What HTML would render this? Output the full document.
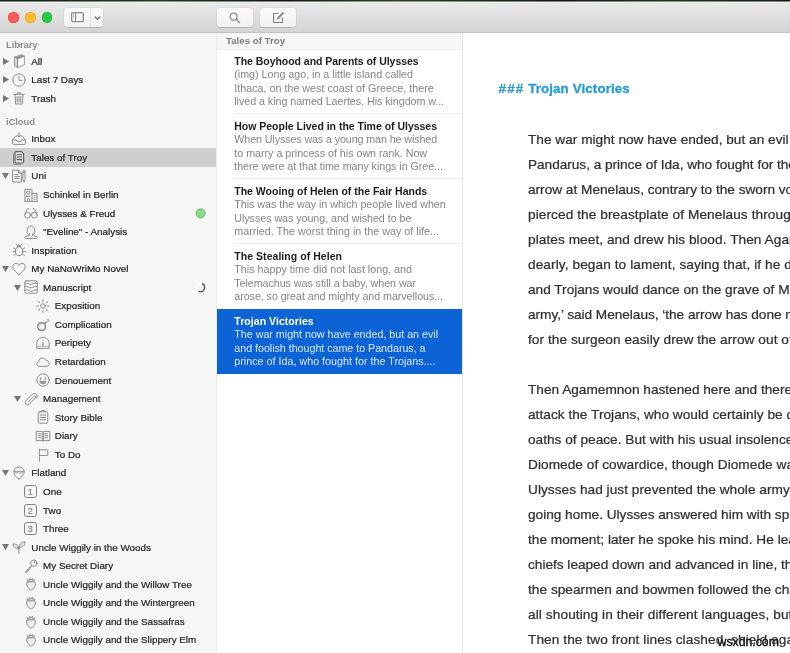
<!DOCTYPE html>
<html>
<head>
<meta charset="utf-8">
<title>Ulysses</title>
<style>
*{box-sizing:border-box;margin:0;padding:0}
html,body{width:790px;height:653px;overflow:hidden;background:#fff;font-family:"Liberation Sans",sans-serif;}
body{position:relative}
#sidebar,#list,#editor,#wm{filter:blur(.35px)}
#topstrip{position:absolute;left:0;top:0;width:790px;height:2px;background:linear-gradient(90deg,#101a10,#1d3a1e 20%,#0e160e 35%,#22451f 50%,#0d140d 70%,#1a3519 85%,#0f170f)}
#topstrip:after{content:"";position:absolute;left:0;top:1px;width:790px;height:1px;background:rgba(232,232,232,.55)}
#toolbar{position:absolute;left:0;top:2px;width:790px;height:31px;background:linear-gradient(#eaeaea,#d4d4d4);border-bottom:1px solid #c3c3c3}
.tl{position:absolute;top:9.9px;width:10.8px;height:10.8px;border-radius:50%}
.btn{position:absolute;top:6.4px;height:18.2px;background:linear-gradient(#fafafa,#f2f2f2);border-radius:3.5px;box-shadow:0 0.5px 1px rgba(0,0,0,.16),0 0 0 .5px rgba(0,0,0,.04)}
#sidebar{position:absolute;left:0;top:33px;width:216.6px;height:620px;background:#f6f6f6;border-right:1px solid #ebebeb}
.sh{position:absolute;left:6px;font-size:9.5px;font-weight:bold;color:#8d8d8d;line-height:12px;letter-spacing:-.1px}
.row{position:absolute;left:0;width:215.6px;height:18.56px;font-size:9.85px;color:#262626;line-height:18.56px;white-space:nowrap;-webkit-text-stroke:.22px #262626}
.row.sel{background:#cfcfcf}
.row span{position:absolute;top:.6px}
.tri{position:absolute;width:8px;height:8px;overflow:visible}
.tri polygon{fill:#757575}
.ic{position:absolute;top:2.3px;width:14px;height:14px;overflow:visible}
.ic *{fill:none;stroke:#878787;stroke-width:.95;stroke-linecap:round;stroke-linejoin:round}
#list{position:absolute;left:216.6px;top:33px;width:245.4px;height:620px;background:#fff}
#lhead{position:absolute;left:0;top:0;width:245.4px;height:16.8px;background:#f6f6f6;border-bottom:1px solid #ececec;font-size:9.7px;font-weight:bold;color:#808080;line-height:16.5px;padding-left:9.4px}
.item{position:absolute;left:0;width:245.4px;height:65px}
.item b{position:absolute;left:17.7px;top:6.0px;font-size:10.5px;line-height:13px;color:#1c1c1c;white-space:nowrap;letter-spacing:0}
.item p{position:absolute;left:17.7px;font-size:10.72px;line-height:13.55px;color:#858585;white-space:nowrap}
.item i{position:absolute;left:17.4px;right:0;bottom:0;height:1px;background:#ececec}
.item.sel{background:#0b63d6}
.item.sel b{color:#fff}
.item.sel p{color:#d9e6fa}
#editor{position:absolute;left:462px;top:33px;width:328px;height:620px;background:#fff;border-left:1px solid #e8e8e8;overflow:hidden}
#h3{position:absolute;left:35.5px;top:47.3px;font-size:13.3px;font-weight:bold;color:#279dd3;-webkit-text-stroke:.3px #279dd3;line-height:18px;white-space:nowrap}
.para{position:absolute;left:65px;font-size:13.65px;line-height:25px;color:#303030;white-space:nowrap;-webkit-text-stroke:.24px #303030}
#wm{position:absolute;left:717.6px;top:634.2px;font-size:12.25px;line-height:16px;color:#000;white-space:nowrap;-webkit-text-stroke:.3px #000;text-shadow:0 0 1.5px rgba(255,255,255,.9),0 0 1.5px rgba(255,255,255,.9)}
</style>
</head>
<body>
<div id="topstrip"></div>
<div id="toolbar">
  <div class="tl" style="left:8px;background:#fc5b57;box-shadow:inset 0 0 0 .5px #df4744"></div>
  <div class="tl" style="left:25px;background:#fdbc2e;box-shadow:inset 0 0 0 .5px #de9f34"></div>
  <div class="tl" style="left:41.5px;background:#28c83f;box-shadow:inset 0 0 0 .5px #27aa35"></div>
  <div class="btn" style="left:64px;width:39px">
    <svg style="position:absolute;left:6.7px;top:4px" width="13" height="10.2" viewBox="0 0 14 11"><rect x=".7" y=".7" width="12.6" height="9.6" rx="1" fill="none" stroke="#8c8c8c" stroke-width="1.4"/><line x1="4.9" y1=".7" x2="4.9" y2="10.3" stroke="#8c8c8c" stroke-width="1.2"/><line x1="2" y1="3" x2="3.6" y2="3" stroke="#8c8c8c" stroke-width=".8"/><line x1="2" y1="5" x2="3.6" y2="5" stroke="#8c8c8c" stroke-width=".8"/></svg>
    <div style="position:absolute;left:26.2px;top:0;width:1px;height:18.2px;background:#e6e6e6"></div>
    <svg style="position:absolute;left:30.2px;top:7.2px" width="7" height="5" viewBox="0 0 7 5"><path d="M1.1 1l2.3 2.3L5.7 1" fill="none" stroke="#757575" stroke-width="1.5" stroke-linecap="round" stroke-linejoin="round"/></svg>
  </div>
  <div class="btn" style="left:217px;width:36px">
    <svg style="position:absolute;left:11.8px;top:3.4px" width="12" height="12" viewBox="0 0 12 12"><circle cx="4.6" cy="4.6" r="3.5" fill="none" stroke="#808080" stroke-width="1.05"/><line x1="7.2" y1="7.2" x2="10.6" y2="10.6" stroke="#808080" stroke-width="1.3" stroke-linecap="round"/></svg>
  </div>
  <div class="btn" style="left:260px;width:36px">
    <svg style="position:absolute;left:12px;top:2.4px" width="13" height="13" viewBox="0 0 13 13"><path d="M6.6 2.4H1.6v9H10.4V6.6" fill="none" stroke="#808080" stroke-width="1.05" stroke-linejoin="round"/><path d="M4.8 8.4l.5-2L10.8 .9l1.4 1.4-5.5 5.5z" fill="#808080" stroke="none"/></svg>
  </div>
</div>

<div id="sidebar">
<div class="sh" style="top:6.0px">Library</div>
<div class="sh" style="top:83.0px">iCloud</div>
<div class="row" style="top:19.12px"><svg class="tri" style="left:2.9px;top:5.8px" viewBox="0 0 8 8"><polygon points="0,0 6.1,3.5 0,7"/></svg><svg class="ic" style="left:12.2px;top:2.3px;width:14px;height:14px" viewBox="0 0 14 14"><g style="stroke-width:.8"><path d="M2.800 3L9.200 .8L12.400 2.200L6 4.800Z" style="fill:#999;stroke-width:.8"/><path d="M2.800 3L6 4.800V13.400L2.800 11.800Z" style="fill:#d8d8d8;stroke-width:.8"/><path d="M6 4.800L12.400 2.200V10.800L6 13.400Z" style="fill:#fdfdfd;stroke-width:.8"/></g></svg><span style="left:31.30px;letter-spacing:0.000px">All</span></div>
<div class="row" style="top:37.32px"><svg class="tri" style="left:2.9px;top:5.8px" viewBox="0 0 8 8"><polygon points="0,0 6.1,3.5 0,7"/></svg><svg class="ic" style="left:12.2px;top:2.3px;width:14px;height:14px" viewBox="0 0 14 14"><circle cx="7" cy="7" r="6.2"/><path d="M7 3.2V7.4H10"/></svg><span style="left:31.30px;letter-spacing:0.000px">Last 7 Days</span></div>
<div class="row" style="top:55.92px"><svg class="tri" style="left:2.9px;top:5.8px" viewBox="0 0 8 8"><polygon points="0,0 6.1,3.5 0,7"/></svg><svg class="ic" style="left:12.2px;top:2.3px;width:14px;height:14px" viewBox="0 0 14 14"><path d="M3 3.6L3.6 13H10.4L11 3.6"/><path d="M1.8 3.4H12.2"/><path d="M5.3 3.2V1.8H8.7V3.2"/><path d="M5.2 5.5V11.2M7 5.5V11.2M8.8 5.5V11.2"/></svg><span style="left:31.30px;letter-spacing:0.000px">Trash</span></div>
<div class="row" style="top:96.72px"><svg class="ic" style="left:12.2px;top:2.3px;width:14px;height:14px" viewBox="0 0 14 14"><path d="M5.400 4H4.200Q3.600 4 3.300 4.500L.6 8V11.600Q.6 12.400 1.400 12.400H12.600Q13.400 12.400 13.400 11.600V8L10.700 4.500Q10.400 4 9.800 4H8.600"/><path d="M.6 8H4.400L5 9.300H9L9.600 8H13.400"/><path d="M7 .4V5M5.500 3.500L7 5L8.500 3.500"/></svg><span style="left:31.30px;letter-spacing:0.000px">Inbox</span></div>
<div class="row sel" style="top:115.28px"><svg class="ic" style="left:12.2px;top:2.3px;width:14px;height:14px" viewBox="0 0 14 14"><path d="M3 2.200H2.600Q1.600 2.200 1.600 3.200V12Q1.600 13.200 2.800 13.200H9" style="stroke:#747474;stroke-width:.9"/><path d="M4.200 .6H9.600L11.600 2.600V10.800Q11.600 12 10.400 12H4.200Q3 12 3 10.800V1.800Q3 .6 4.200 .6Z" style="fill:#e2e2e2;stroke:#666;stroke-width:1.2"/><path d="M5 3.800H9.600M5 6H9.600M5 8.600H9.600" style="stroke:#5e5e5e;stroke-width:1.1"/></svg><span style="left:31.30px;letter-spacing:0.000px">Tales of Troy</span></div>
<div class="row" style="top:133.84px"><svg class="tri" style="left:1.9px;top:6.4px" viewBox="0 0 8 8"><polygon points="0,0 7,0 3.5,6.1"/></svg><svg class="ic" style="left:12.2px;top:2.3px;width:14px;height:14px" viewBox="0 0 14 14"><path d="M1 1.2H6.8L9.4 3.8V13H1Z"/><path d="M6.6 1.4V4H9.2"/><path d="M2.8 5.6H6.2M2.8 7.6H7.4M2.8 9.6H7.4"/><path d="M11 2.2Q11 1 12 1T13 2.2V10.6L12 13.2L11 10.6Z"/><path d="M11 3.4H13"/></svg><span style="left:31.30px;letter-spacing:0.000px">Uni</span></div>
<div class="row" style="top:152.40px"><svg class="ic" style="left:23.95px;top:2.3px;width:14px;height:14px" viewBox="0 0 14 14"><path d="M1 13.4V1.4H8V13.4"/><path d="M8 5.4H13V13.4"/><path d="M.6 13.4H13.6"/><path d="M3 3.4H5.8V5.2H3ZM3 7H5.8V8.6H3ZM3.4 13.2V10.8H5.6V13.2M10 7.6H11.4M10 9.6H11.4M10 11.6H11.4" style="stroke-width:.7"/></svg><span style="left:43.05px;letter-spacing:0.000px">Schinkel in Berlin</span></div>
<div class="row" style="top:170.96px"><svg class="ic" style="left:23.95px;top:2.3px;width:14px;height:14px" viewBox="0 0 14 14"><circle cx="3.6" cy="9.2" r="2.9"/><circle cx="10.4" cy="9.2" r="2.9"/><path d="M6.4 8.6Q7 8 7.6 8.6"/><path d="M1 8L3.2 3.2Q3.8 2.2 5 2.8M13 8L10.8 3.2Q10.2 2.2 9 2.8"/></svg><span style="left:43.05px;letter-spacing:0.000px">Ulysses &amp; Freud</span><svg style="position:absolute;left:195px;top:4px" width="11" height="11" viewBox="0 0 11 11"><circle cx="5.6" cy="5.4" r="4.6" fill="#8bd98b" stroke="#6fc06e" stroke-width="1"/></svg></div>
<div class="row" style="top:189.52px"><svg class="ic" style="left:23.95px;top:2.3px;width:14px;height:14px" viewBox="0 0 14 14"><path d="M4.4 9.4C2.6 8.6 3.2 6.2 3.4 4.6C3.6 2.4 5 1 7 1S10.4 2.4 10.6 4.6C10.8 6.2 11.4 8.6 9.6 9.4"/><path d="M5.4 8.6V10.4L1.6 11.4Q.8 11.7 .8 12.4T1.6 13.4H12.4Q13.2 13.4 13.2 12.4T12.4 11.4L8.6 10.4V8.6"/></svg><span style="left:43.05px;letter-spacing:0.000px">"Eveline" - Analysis</span></div>
<div class="row" style="top:208.08px"><svg class="ic" style="left:12.2px;top:2.3px;width:14px;height:14px" viewBox="0 0 14 14"><path d="M7 3.6C9.4 3.6 10.6 5.6 10.6 8.4S9.2 12.6 7 12.6S3.400 11.200 3.400 8.400S4.600 3.600 7 3.600Z"/><path d="M5.4 3.800Q5.400 2 7 2T8.600 3.800"/><path d="M3.600 6.400L1.400 5M3.400 8.600H.8M3.800 10.800L1.600 12.600M10.400 6.400L12.600 5M10.600 8.600H13.200M10.200 10.800L12.400 12.600M5.400 2.400L4.400 1M8.600 2.400L9.600 1"/></svg><span style="left:31.30px;letter-spacing:0.000px">Inspiration</span></div>
<div class="row" style="top:226.64px"><svg class="tri" style="left:1.9px;top:6.4px" viewBox="0 0 8 8"><polygon points="0,0 7,0 3.5,6.1"/></svg><svg class="ic" style="left:12.2px;top:2.3px;width:14px;height:14px" viewBox="0 0 14 14"><path d="M7 12.600C4 10.200 .800 7.800 .800 4.800C.800 2.800 2.200 1.400 4 1.400C5.400 1.400 6.400 2.200 7 3.400C7.600 2.200 8.600 1.400 10 1.400C11.800 1.400 13.200 2.800 13.200 4.800C13.200 7.800 10 10.200 7 12.600Z"/></svg><span style="left:31.30px;letter-spacing:0.000px">My NaNoWriMo Novel</span></div>
<div class="row" style="top:245.20px"><svg class="tri" style="left:14.2px;top:6.4px" viewBox="0 0 8 8"><polygon points="0,0 7,0 3.5,6.1"/></svg><svg class="ic" style="left:23.95px;top:2.3px;width:14px;height:14px" viewBox="0 0 14 14"><rect x=".8" y=".8" width="12.400" height="12.400" rx="1.400"/><path d="M.8 3.400Q2.400 2.400 4 3.400T7 4.400T10 3.400T13.200 3.400M.8 6.800Q2.400 5.800 4 6.800T7 7.800T10 6.800T13.200 6.800M.8 10.200Q2.400 9.200 4 10.200T7 11.200T10 10.200T13.200 10.200"/></svg><span style="left:43.05px;letter-spacing:0.000px">Manuscript</span><svg style="position:absolute;left:195px;top:4px" width="11" height="11" viewBox="0 0 11 11"><circle cx="5.500" cy="5.500" r="4.200" fill="none" stroke="#fcfcfc" stroke-width="1.500"/><path d="M6.94 1.55A4.2 4.2 0 1 1 3.4 9.14" fill="none" stroke="#5e5e5e" stroke-width="1.500"/></svg></div>
<div class="row" style="top:263.76px"><svg class="ic" style="left:35.7px;top:2.3px;width:14px;height:14px" viewBox="0 0 14 14"><circle cx="7" cy="7" r="2.300"/><path d="M7 .6V2.600M7 11.400V13.400M.6 7H2.600M11.400 7H13.400M2.500 2.500L3.900 3.900M10.100 10.100L11.500 11.500M2.500 11.500L3.900 10.100M10.100 3.900L11.500 2.500"/></svg><span style="left:54.80px;letter-spacing:0.000px">Exposition</span></div>
<div class="row" style="top:282.32px"><svg class="ic" style="left:35.7px;top:2.3px;width:14px;height:14px" viewBox="0 0 14 14"><circle cx="5.600" cy="8.600" r="3.900" style="stroke-width:1.5"/><path d="M8.400 5.800L10 4.200" style="stroke-width:1.4"/><path d="M10 4.200Q10.800 2.600 12.400 3" style="stroke-width:.8"/><path d="M12.600 1.200V2M13.400 2.800H12.800M11.400 1.400L11.800 2" style="stroke-width:.6"/><path d="M3.600 8.200Q3.800 6.800 5.200 6.600" style="stroke-width:.7;stroke:#b5b5b5"/></svg><span style="left:54.80px;letter-spacing:0.000px">Complication</span></div>
<div class="row" style="top:300.88px"><svg class="ic" style="left:35.7px;top:2.3px;width:14px;height:14px" viewBox="0 0 14 14"><path d="M.8 12V7.400C.8 3.800 3.600 1.400 7 1.400S13.200 3.800 13.200 7.400V12Z"/><path d="M7 6.400V10M7 4.400V4.600"/><path d="M.8 10.400H13.200" style="stroke-width:.6"/></svg><span style="left:54.80px;letter-spacing:0.000px">Peripety</span></div>
<div class="row" style="top:319.44px"><svg class="ic" style="left:35.7px;top:2.3px;width:14px;height:14px" viewBox="0 0 14 14"><path d="M3.400 11.400C1.800 11.400 .8 10.400 .8 9C.8 7.800 1.600 6.800 2.800 6.600C2.800 4.400 4.400 3 6.200 3C7.800 3 9 3.800 9.600 5.200C11.600 5.200 13.200 6.600 13.200 8.400C13.200 10.200 11.800 11.400 10.200 11.400Z"/></svg><span style="left:54.80px;letter-spacing:0.000px">Retardation</span></div>
<div class="row" style="top:338.00px"><svg class="ic" style="left:35.7px;top:2.3px;width:14px;height:14px" viewBox="0 0 14 14"><circle cx="7" cy="7" r="6.200"/><path d="M4.800 5V6M9.200 5V6" style="stroke-width:1.400"/><path d="M3.800 8.200H10.200Q9.800 11 7 11T3.800 8.200Z" style="fill:#9a9a9a;stroke-width:.7"/></svg><span style="left:54.80px;letter-spacing:0.000px">Denouement</span></div>
<div class="row" style="top:356.56px"><svg class="tri" style="left:14.2px;top:6.4px" viewBox="0 0 8 8"><polygon points="0,0 7,0 3.5,6.1"/></svg><svg class="ic" style="left:23.95px;top:2.3px;width:14px;height:14px" viewBox="0 0 14 14"><path d="M4.400 9.800L9.800 4.400Q10.800 3.400 11.600 4.200T11.400 6L5.400 12Q3.600 13.600 2 12T2 8.600L8.400 2.200Q10.400 .4 12.400 2.200T12.600 6.200"/></svg><span style="left:43.05px;letter-spacing:0.000px">Management</span></div>
<div class="row" style="top:375.12px"><svg class="ic" style="left:35.7px;top:2.3px;width:14px;height:14px" viewBox="0 0 14 14"><rect x="2.200" y="1.800" width="9.600" height="11.400" rx="1.400"/><path d="M5 1.800V.8H9V1.800" /><path d="M4.200 5H9.800M4.200 7.400H9.800M4.200 9.800H9.800"/></svg><span style="left:54.80px;letter-spacing:0.000px">Story Bible</span></div>
<div class="row" style="top:393.68px"><svg class="ic" style="left:35.7px;top:2.3px;width:14px;height:14px" viewBox="0 0 14 14"><path d="M.6 2.400H6.200Q7 2.400 7 3.200V12.200Q7 11.600 6.200 11.600H.6ZM13.400 2.400H7.800Q7 2.400 7 3.200V12.200Q7 11.600 7.800 11.600H13.400Z"/><path d="M2.400 4.800H5.200M2.400 6.800H5.200M2.400 8.800H5.200M8.800 4.800H11.600M8.800 6.800H11.600M8.800 8.800H11.600"/></svg><span style="left:54.80px;letter-spacing:0.000px">Diary</span></div>
<div class="row" style="top:412.24px"><svg class="ic" style="left:35.7px;top:2.3px;width:14px;height:14px" viewBox="0 0 14 14"><path d="M3.400 1V13.400"/><path d="M3.400 1.800H11.800V7.400H3.400"/></svg><span style="left:54.80px;letter-spacing:0.000px">To Do</span></div>
<div class="row" style="top:430.80px"><svg class="tri" style="left:1.9px;top:6.4px" viewBox="0 0 8 8"><polygon points="0,0 7,0 3.5,6.1"/></svg><svg class="ic" style="left:12.2px;top:2.3px;width:14px;height:14px" viewBox="0 0 14 14"><path d="M7 13C5 11.800 1.800 9.200 1.800 5.800C1.800 2.800 4.200 1 7 1S12.200 2.800 12.200 5.800C12.200 9.200 9 11.800 7 13Z"/><path d="M2 5.400H12" style="stroke-width:.8"/><path d="M3.200 5.600Q3.400 7.400 5 7.100T6.400 5.800M10.800 5.600Q10.600 7.400 9 7.100T7.600 5.800" style="stroke-width:.8"/></svg><span style="left:31.30px;letter-spacing:0.000px">Flatland</span></div>
<div class="row" style="top:449.36px"><div style="position:absolute;left:23.849999999999998px;top:2.8px;width:13px;height:13px;border:1.25px solid #828282;border-radius:2.8px;-webkit-text-stroke:.2px #858585;font-size:9px;line-height:12.2px;text-align:center;color:#858585">1</div><span style="left:43.05px;letter-spacing:0.000px">One</span></div>
<div class="row" style="top:467.92px"><div style="position:absolute;left:23.849999999999998px;top:2.8px;width:13px;height:13px;border:1.25px solid #828282;border-radius:2.8px;-webkit-text-stroke:.2px #858585;font-size:9px;line-height:12.2px;text-align:center;color:#858585">2</div><span style="left:43.05px;letter-spacing:0.000px">Two</span></div>
<div class="row" style="top:486.48px"><div style="position:absolute;left:23.849999999999998px;top:2.8px;width:13px;height:13px;border:1.25px solid #828282;border-radius:2.8px;-webkit-text-stroke:.2px #858585;font-size:9px;line-height:12.2px;text-align:center;color:#858585">3</div><span style="left:43.05px;letter-spacing:0.000px">Three</span></div>
<div class="row" style="top:505.04px"><svg class="tri" style="left:1.9px;top:6.4px" viewBox="0 0 8 8"><polygon points="0,0 7,0 3.5,6.1"/></svg><svg class="ic" style="left:12.2px;top:2.3px;width:14px;height:14px" viewBox="0 0 14 14"><path d="M7 13.400V6.800"/><path d="M7 7.400C7 4.600 9 2.200 13 1.600C13.200 5.400 10.600 7.600 7 7.400ZM7 8.800C4.400 9 1.400 7.600 1 4C4.200 3.600 6.600 5.600 7 8.800Z"/><path d="M7.400 7L11 3.400M6.600 8.400L3.200 5.600" style="stroke-width:.6"/></svg><span style="left:31.30px;letter-spacing:0.000px">Uncle Wiggily in the Woods</span></div>
<div class="row" style="top:523.60px"><svg class="ic" style="left:23.95px;top:2.3px;width:14px;height:14px" viewBox="0 0 14 14"><circle cx="9.800" cy="4.200" r="3.200"/><path d="M7.400 6.600L1.200 12.800V13.200H3V12H4.200V10.800H5.400L7.400 6.600" style="stroke-width:.9"/><path d="M10.600 3V3.400" style="stroke-width:1.300"/></svg><span style="left:43.05px;letter-spacing:0.000px">My Secret Diary</span></div>
<div class="row" style="top:542.16px"><svg class="ic" style="left:23.95px;top:2.3px;width:14px;height:14px" viewBox="0 0 14 14"><path d="M3 5.200C2.200 6.600 2.600 9.200 4.200 11C5.200 12.200 6.200 13 7 13S8.800 12.200 9.800 11C11.400 9.200 11.800 6.600 11 5.200C10 4 8.400 4.800 7 4.800S4 4 3 5.200Z" style="fill:#ececec"/><path d="M3.400 2.600L5.200 3.800L5.600 1.200L7 3.200L8.400 1.200L8.800 3.800L10.600 2.600L9.800 4.800H4.200Z" style="fill:#e0e0e0;stroke-width:.8"/></svg><span style="left:43.05px;letter-spacing:0.000px">Uncle Wiggily and the Willow Tree</span></div>
<div class="row" style="top:560.72px"><svg class="ic" style="left:23.95px;top:2.3px;width:14px;height:14px" viewBox="0 0 14 14"><path d="M3 5.200C2.200 6.600 2.600 9.200 4.200 11C5.200 12.200 6.200 13 7 13S8.800 12.200 9.800 11C11.400 9.200 11.800 6.600 11 5.200C10 4 8.400 4.800 7 4.800S4 4 3 5.200Z" style="fill:#ececec"/><path d="M3.400 2.600L5.200 3.800L5.600 1.200L7 3.200L8.400 1.200L8.800 3.800L10.600 2.600L9.800 4.800H4.200Z" style="fill:#e0e0e0;stroke-width:.8"/></svg><span style="left:43.05px;letter-spacing:0.000px">Uncle Wiggily and the Wintergreen</span></div>
<div class="row" style="top:579.28px"><svg class="ic" style="left:23.95px;top:2.3px;width:14px;height:14px" viewBox="0 0 14 14"><path d="M3 5.200C2.200 6.600 2.600 9.200 4.200 11C5.200 12.200 6.200 13 7 13S8.800 12.200 9.800 11C11.400 9.200 11.800 6.600 11 5.200C10 4 8.400 4.800 7 4.800S4 4 3 5.200Z" style="fill:#ececec"/><path d="M3.400 2.600L5.200 3.800L5.600 1.200L7 3.200L8.400 1.200L8.800 3.800L10.600 2.600L9.800 4.800H4.200Z" style="fill:#e0e0e0;stroke-width:.8"/></svg><span style="left:43.05px;letter-spacing:0.000px">Uncle Wiggily and the Sassafras</span></div>
<div class="row" style="top:597.84px"><svg class="ic" style="left:23.95px;top:2.3px;width:14px;height:14px" viewBox="0 0 14 14"><path d="M3 5.200C2.200 6.600 2.600 9.200 4.200 11C5.200 12.200 6.200 13 7 13S8.800 12.200 9.800 11C11.400 9.200 11.800 6.600 11 5.200C10 4 8.400 4.800 7 4.800S4 4 3 5.200Z" style="fill:#ececec"/><path d="M3.400 2.600L5.200 3.800L5.600 1.200L7 3.200L8.400 1.200L8.800 3.800L10.600 2.600L9.800 4.800H4.200Z" style="fill:#e0e0e0;stroke-width:.8"/></svg><span style="left:43.05px;letter-spacing:0.000px">Uncle Wiggily and the Slippery Elm</span></div>
<div class="row" style="top:616.40px"><svg class="ic" style="left:23.95px;top:2.3px;width:14px;height:14px" viewBox="0 0 14 14"><path d="M3 5.200C2.200 6.600 2.600 9.200 4.200 11C5.200 12.200 6.200 13 7 13S8.800 12.200 9.800 11C11.400 9.200 11.800 6.600 11 5.200C10 4 8.400 4.800 7 4.800S4 4 3 5.200Z" style="fill:#ececec"/><path d="M3.400 2.600L5.200 3.800L5.600 1.200L7 3.200L8.400 1.200L8.800 3.800L10.600 2.600L9.800 4.800H4.200Z" style="fill:#e0e0e0;stroke-width:.8"/></svg><span style="left:43.05px;letter-spacing:0.000px"></span></div>
</div>

<div id="list">
  <div id="lhead">Tales of Troy</div>
<div class="item" style="top:16px"><b style="letter-spacing:-0.036px">The Boyhood and Parents of Ulysses</b><p style="top:19.30px;letter-spacing:-0.015px">(img) Long ago, in a little island called</p><p style="top:32.85px;letter-spacing:0.010px">Ithaca, on the west coast of Greece, there</p><p style="top:46.40px;letter-spacing:-0.050px">lived a king named Laertes. His kingdom w...</p><i></i></div>
<div class="item" style="top:81px"><b style="letter-spacing:-0.019px">How People Lived in the Time of Ulysses</b><p style="top:19.30px;letter-spacing:-0.106px">When Ulysses was a young man he wished</p><p style="top:32.85px;letter-spacing:-0.020px">to marry a princess of his own rank. Now</p><p style="top:46.40px;letter-spacing:-0.051px">there were at that time many kings in Gree...</p><i></i></div>
<div class="item" style="top:146px"><b style="letter-spacing:0.000px">The Wooing of Helen of the Fair Hands</b><p style="top:19.30px;letter-spacing:-0.030px">This was the way in which people lived when</p><p style="top:32.85px;letter-spacing:-0.049px">Ulysses was young, and wished to be</p><p style="top:46.40px;letter-spacing:0.012px">married. The worst thing in the way of life...</p><i></i></div>
<div class="item" style="top:211px"><b style="letter-spacing:0.045px">The Stealing of Helen</b><p style="top:19.30px;letter-spacing:0.004px">This happy time did not last long, and</p><p style="top:32.85px;letter-spacing:-0.059px">Telemachus was still a baby, when war</p><p style="top:46.40px;letter-spacing:-0.064px">arose, so great and mighty and marvellous...</p></div>
<div class="item sel" style="top:276px"><b style="letter-spacing:0.052px">Trojan Victories</b><p style="top:19.30px;letter-spacing:-0.016px">The war might now have ended, but an evil</p><p style="top:32.85px;letter-spacing:-0.032px">and foolish thought came to Pandarus, a</p><p style="top:46.40px;letter-spacing:0.012px">prince of Ida, who fought for the Trojans....</p></div>
</div>

<div id="editor">
<div id="h3"><span style="letter-spacing:1.25px">###</span> <span style="letter-spacing:.14px">Trojan Victories</span></div>
<div class="para" id="ln0" style="top:93.8px;letter-spacing:0.012px">The war might now have ended, but an evil and foolish thought came to</div>
<div class="para" id="ln1" style="top:118.8px;letter-spacing:-0.030px">Pandarus, a prince of Ida, who fought for the Trojans. He chose to shoot an</div>
<div class="para" id="ln2" style="top:143.8px;letter-spacing:-0.004px">arrow at Menelaus, contrary to the sworn vows of peace, and the arrow</div>
<div class="para" id="ln3" style="top:168.8px;letter-spacing:0.083px">pierced the breastplate of Menelaus through the place where the clasped</div>
<div class="para" id="ln4" style="top:193.8px;letter-spacing:0.067px">plates meet, and drew his blood. Then Agamemnon, who loved his brother</div>
<div class="para" id="ln5" style="top:218.8px;letter-spacing:0.093px">dearly, began to lament, saying that, if he died, the army would all go home</div>
<div class="para" id="ln6" style="top:243.8px;letter-spacing:-0.002px">and Trojans would dance on the grave of Menelaus. ‘Do not alarm all our</div>
<div class="para" id="ln7" style="top:268.8px;letter-spacing:-0.030px">army,’ said Menelaus, ‘the arrow has done me little harm;’ and so it proved,</div>
<div class="para" id="ln8" style="top:293.8px;letter-spacing:0.056px">for the surgeon easily drew the arrow out of the wound.</div>
<div class="para" id="ln9" style="top:344.3px;letter-spacing:0.004px">Then Agamemnon hastened here and there, bidding the Greeks arm and</div>
<div class="para" id="ln10" style="top:369.3px;letter-spacing:0.033px">attack the Trojans, who would certainly be defeated, for they had broken the</div>
<div class="para" id="ln11" style="top:394.3px;letter-spacing:0.017px">oaths of peace. But with his usual insolence he chose to accuse Ulysses and</div>
<div class="para" id="ln12" style="top:419.3px;letter-spacing:0.058px">Diomede of cowardice, though Diomede was as brave as any man, and</div>
<div class="para" id="ln13" style="top:444.3px;letter-spacing:0.043px">Ulysses had just prevented the whole army from launching their ships and</div>
<div class="para" id="ln14" style="top:469.3px;letter-spacing:-0.009px">going home. Ulysses answered him with spirit, but Diomede said nothing at</div>
<div class="para" id="ln15" style="top:494.3px;letter-spacing:0.024px">the moment; later he spoke his mind. He leaped from his chariot, and all the</div>
<div class="para" id="ln16" style="top:519.3px;letter-spacing:-0.008px">chiefs leaped down and advanced in line, the chariots following them, while</div>
<div class="para" id="ln17" style="top:544.3px;letter-spacing:0.031px">the spearmen and bowmen followed the chariots. The Trojan army advanced,</div>
<div class="para" id="ln18" style="top:569.3px;letter-spacing:0.101px">all shouting in their different languages, but the Greeks came on silently.</div>
<div class="para" id="ln19" style="top:594.3px;letter-spacing:0.085px">Then the two front lines clashed, shield against shield, and the noise was like</div>
</div>
<div id="wm">wsxdn.com</div>
</body>
</html>
